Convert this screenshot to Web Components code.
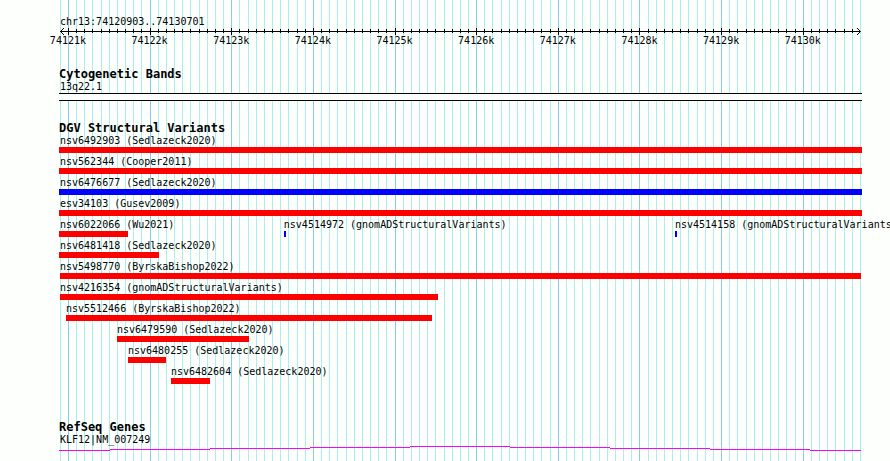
<!DOCTYPE html>
<html lang="en">
<head>
<meta charset="utf-8">
<title>chr13:74120903..74130701</title>
<style>
    body {
        margin: 0;
        background: #fdfffc;
        color: #000;
        font: 10px/12px "DejaVu Sans Mono", "Liberation Mono", monospace;
        overflow: hidden;
    }
</style>
</head>
<body>
<genome-browser>
    <genome-ruler></genome-ruler>
    <genome-track label="Cytogenetic Bands">
        <cyto-band label="13q22.1"></cyto-band>
    </genome-track>
    <genome-track id="variants" label="DGV Structural Variants"></genome-track>
    <genome-track class="spaced" label="RefSeq Genes">
        <gene-line label="KLF12|NM_007249"></gene-line>
    </genome-track>
</genome-browser>

<script>
const START = 74120903
const END = 74130701

// position of a base as a percentage of the visible segment
const percent = (base) => (base - START) / (END - START) * 100

const marks = (step) => {
    const list = []
    for (let base = Math.floor(START / 100) * 100; base <= END; base += step) {
        list.push({ base, x: percent(base), major: base % 1000 === 0 })
    }
    return list
}

class GenomeBrowser extends HTMLElement{
    constructor(){
        super()
        this.attachShadow({mode:"open"})
    }

    connectedCallback(){
        const lines = marks(100).map(({x, major}) =>
            `<i class="${major ? 'major' : ''}" style="margin-left: ${x}%"></i>`
        ).join('')

        this.shadowRoot.innerHTML = `
<style>
    :host {
        display: block;
        position: relative;
        box-sizing: border-box;
        min-height: 100vh;
        padding: 16px 30px 10px 60px;
    }
    .grid {
        position: absolute;
        inset: 0 30px 0 60px;
        display: grid;
        grid-template-columns: minmax(0, 1fr);
    }
    i {
        grid-area: 1 / 1;
        width: 1px;
        background: #afeeee;
    }
    .major {
        background: #87ceeb;
    }
    .tracks {
        position: relative;
        display: flex;
        flex-direction: column;
        gap: 20px;
    }
</style>
<div class="grid" aria-hidden="true">${lines}</div>
<div class="tracks"><slot></slot></div>
`
    }
}

class GenomeRuler extends HTMLElement{
    constructor(){
        super()
        this.attachShadow({mode:"open"})
    }

    connectedCallback(){
        const all = marks(100)
        // the arrowheads stand in for the outermost ticks
        const ticks = all.slice(1, -1).map(({x, major}) => major
            ? `<rect x="${x}%" y="0" width="1" height="7"/>`
            : `<rect x="${x}%" y="1" width="1" height="4"/>`
        ).join('')
        const numbers = all.filter(({major}) => major).map(({base, x}) =>
            `<text x="${x}%" y="16">${base / 1000}k</text>`
        ).join('')

        this.shadowRoot.innerHTML = `
<style>
    :host {
        display: block;
    }
    svg {
        display: block;
        width: 100%;
        height: 19px;
        overflow: visible;
    }
    rect {
        shape-rendering: crispEdges;
    }
    text {
        text-anchor: middle;
    }
    path {
        fill: none;
        stroke: #000;
    }
</style>
<div>chr13:${START}..${END}</div>
<svg>
    <rect y="3" width="100%" height="1"/>
    ${ticks}
    <path d="M4 0L0.5 3.5L4 7"/>
    <svg x="100%" overflow="visible"><path d="M-3 0L0.5 3.5L-3 7"/></svg>
    ${numbers}
</svg>
`
    }
}

class GenomeTrack extends HTMLElement{
    constructor(){
        super()
        this.attachShadow({mode:"open"})
    }

    connectedCallback(){
        this.shadowRoot.innerHTML = `
<style>
    :host {
        display: block;
    }
    :host(.spaced) {
        margin-top: 16px;
    }
    h2 {
        margin: 0 0 0 -1px;
        font-size: 12px;
        line-height: 14px;
        font-weight: bold;
    }
    .rows {
        display: flex;
        flex-direction: column;
        gap: 3px;
    }
</style>
<h2></h2>
<div class="rows"><slot></slot></div>
`
        this.shadowRoot.querySelector('h2').textContent = this.getAttribute('label')
    }
}

class CytoBand extends HTMLElement{
    constructor(){
        super()
        this.attachShadow({mode:"open"})
    }

    connectedCallback(){
        this.shadowRoot.innerHTML = `
<style>
    :host {
        display: block;
    }
    .band {
        height: 6px;
        margin: 0 -2px 0 -1px;
        border: solid #000;
        border-width: 1px 0;
        background: #fdfffc;
    }
</style>
<div>${this.getAttribute('label')}</div>
<div class="band"></div>
`
    }
}

// one line of the track, features share its single grid cell
class FeatureLane extends HTMLElement{
    constructor(){
        super()
        this.attachShadow({mode:"open"})
        this.shadowRoot.innerHTML = `
<style>
    :host {
        display: grid;
        grid-template-columns: minmax(0, 1fr);
    }
    ::slotted(*) {
        grid-area: 1 / 1;
    }
</style>
<slot></slot>
`
    }
}

class VariantFeature extends HTMLElement{
    constructor(){
        super()
        this.attachShadow({mode:"open"})
    }

    connectedCallback(){
        const left = percent(Number(this.getAttribute('start')))
        const width = percent(Number(this.getAttribute('end'))) - left

        this.shadowRoot.innerHTML = `
<style>
    :host {
        display: block;
        white-space: nowrap;
    }
    .label {
        margin-left: ${Math.max(left, 0)}%;
    }
    .bar {
        width: ${width}%;
        height: 6px;
        margin-left: ${left}%;
        background: ${this.getAttribute('color') ?? 'red'};
    }
</style>
<div class="label">${this.getAttribute('label')}</div>
<div class="bar"></div>
`
    }
}

class GeneLine extends HTMLElement{
    constructor(){
        super()
        this.attachShadow({mode:"open"})
    }

    connectedCallback(){
        // shallow arc of the intron, one step per segment: [from %, to %, y]
        const steps = [
            [-0.125, 6.25, 4], [6.25, 18.75, 3], [18.75, 31.25, 2],
            [31.25, 43.75, 1], [43.75, 56.25, 0], [56.25, 68.75, 1],
            [68.75, 81.25, 2], [81.25, 93.75, 3], [93.75, 100.125, 4]
        ]
        const rects = steps.map(([from, to, y]) =>
            `<rect x="${from}%" y="${y}" width="${to - from}%" height="1"/>`
        ).join('')

        this.shadowRoot.innerHTML = `
<style>
    :host {
        display: block;
    }
    svg {
        display: block;
        width: 100%;
        height: 5px;
        overflow: visible;
        fill: #f0f;
        shape-rendering: crispEdges;
    }
</style>
<div>${this.getAttribute('label')}</div>
<svg aria-hidden="true">${rects}</svg>
`
    }
}

const lanes = [
    [['nsv6492903 (Sedlazeck2020)', 74120891, 74130725]],
    [['nsv562344 (Cooper2011)', 74120891, 74130725]],
    [['nsv6476677 (Sedlazeck2020)', 74120891, 74130725, 'blue']],
    [['esv34103 (Gusev2009)', 74120891, 74130725]],
    [
        ['nsv6022066 (Wu2021)', 74120891, 74121736],
        ['nsv4514972 (gnomADStructuralVariants)', 74123644, 74123668, 'blue'],
        ['nsv4514158 (gnomADStructuralVariants)', 74128435, 74128459, 'blue']
    ],
    [['nsv6481418 (Sedlazeck2020)', 74120891, 74122115]],
    [['nsv5498770 (ByrskaBishop2022)', 74120903, 74130713]],
    [['nsv4216354 (gnomADStructuralVariants)', 74120903, 74125533]],
    [['nsv5512466 (ByrskaBishop2022)', 74120976, 74125459]],
    [['nsv6479590 (Sedlazeck2020)', 74121601, 74123218]],
    [['nsv6480255 (Sedlazeck2020)', 74121736, 74122201]],
    [['nsv6482604 (Sedlazeck2020)', 74122262, 74122740]]
]

const variants = document.querySelector('#variants')
lanes.forEach((features) => {
    const lane = document.createElement('feature-lane')
    features.forEach(([label, start, end, color]) => {
        const feature = document.createElement('variant-feature')
        feature.setAttribute('label', label)
        feature.setAttribute('start', start)
        feature.setAttribute('end', end)
        if (color) feature.setAttribute('color', color)
        lane.appendChild(feature)
    })
    variants.appendChild(lane)
})

window.customElements.define('genome-browser', GenomeBrowser)
window.customElements.define('genome-ruler', GenomeRuler)
window.customElements.define('genome-track', GenomeTrack)
window.customElements.define('cyto-band', CytoBand)
window.customElements.define('feature-lane', FeatureLane)
window.customElements.define('variant-feature', VariantFeature)
window.customElements.define('gene-line', GeneLine)
</script>
</body>
</html>
